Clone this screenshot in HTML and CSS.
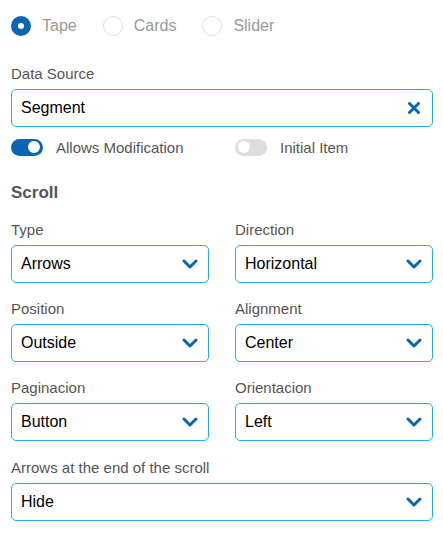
FILE: index.html
```html
<!DOCTYPE html>
<html lang="en">
<head>
  <meta charset="UTF-8">
  <title>Scroll settings</title>
  <link rel="stylesheet" href="styles.css">
</head>
<body>
  <div class="mode-row">
    <label class="radio checked"><span class="dot"></span>Tape</label>
    <label class="radio"><span class="dot"></span>Cards</label>
    <label class="radio"><span class="dot"></span>Slider</label>
  </div>

  <div class="field">
    <div class="field-label">Data Source</div>
    <div class="box">
      <span class="value">Segment</span>
      <svg class="clear" width="12" height="12" viewBox="0 0 12 12"><path d="M1.5 1.5L10.5 10.5M10.5 1.5L1.5 10.5" stroke="#0a66b2" stroke-width="3" stroke-linecap="round"/></svg>
    </div>
  </div>

  <div class="toggles">
    <label class="toggle on"><span class="track"><span class="knob"></span></span>Allows Modification</label>
    <label class="toggle"><span class="track"><span class="knob"></span></span>Initial Item</label>
  </div>

  <h2>Scroll</h2>

  <div class="grid">
    <div class="field">
      <div class="field-label">Type</div>
      <div class="box"><span class="value">Arrows</span><svg class="chev" width="16" height="10" viewBox="0 0 16 10"><path d="M2 2L8 8L14 2" fill="none" stroke="#0a66b2" stroke-width="3" stroke-linecap="round" stroke-linejoin="round"/></svg></div>
    </div>
    <div class="field">
      <div class="field-label">Direction</div>
      <div class="box"><span class="value">Horizontal</span><svg class="chev" width="16" height="10" viewBox="0 0 16 10"><path d="M2 2L8 8L14 2" fill="none" stroke="#0a66b2" stroke-width="3" stroke-linecap="round" stroke-linejoin="round"/></svg></div>
    </div>
    <div class="field">
      <div class="field-label">Position</div>
      <div class="box"><span class="value">Outside</span><svg class="chev" width="16" height="10" viewBox="0 0 16 10"><path d="M2 2L8 8L14 2" fill="none" stroke="#0a66b2" stroke-width="3" stroke-linecap="round" stroke-linejoin="round"/></svg></div>
    </div>
    <div class="field">
      <div class="field-label">Alignment</div>
      <div class="box"><span class="value">Center</span><svg class="chev" width="16" height="10" viewBox="0 0 16 10"><path d="M2 2L8 8L14 2" fill="none" stroke="#0a66b2" stroke-width="3" stroke-linecap="round" stroke-linejoin="round"/></svg></div>
    </div>
    <div class="field">
      <div class="field-label">Paginacion</div>
      <div class="box"><span class="value">Button</span><svg class="chev" width="16" height="10" viewBox="0 0 16 10"><path d="M2 2L8 8L14 2" fill="none" stroke="#0a66b2" stroke-width="3" stroke-linecap="round" stroke-linejoin="round"/></svg></div>
    </div>
    <div class="field">
      <div class="field-label">Orientacion</div>
      <div class="box"><span class="value">Left</span><svg class="chev" width="16" height="10" viewBox="0 0 16 10"><path d="M2 2L8 8L14 2" fill="none" stroke="#0a66b2" stroke-width="3" stroke-linecap="round" stroke-linejoin="round"/></svg></div>
    </div>
  </div>

  <div class="field">
    <div class="field-label">Arrows at the end of the scroll</div>
    <div class="box"><span class="value">Hide</span><svg class="chev" width="16" height="10" viewBox="0 0 16 10"><path d="M2 2L8 8L14 2" fill="none" stroke="#0a66b2" stroke-width="3" stroke-linecap="round" stroke-linejoin="round"/></svg></div>
  </div>
</body>
</html>
```

FILE: styles.css
```css
body {
  margin: 0;
  padding: 16px 10px 0 11px;
  font-family: "Liberation Sans", Arial, sans-serif;
  background-color: #ffffff;
  color: #555;
}
.mode-row {
  display: flex;
  align-items: center;
  gap: 26px;
  height: 20px;
  margin-bottom: 29px;
}
.radio {
  display: flex;
  align-items: center;
  gap: 11px;
  font-size: 16px;
  color: #999;
  cursor: pointer;
}
.radio .dot {
  width: 20px;
  height: 20px;
  box-sizing: border-box;
  border-radius: 50%;
  border: 1.5px solid #ddd;
  background-color: #fff;
}
.radio.checked .dot {
  border: 7px solid #0a66b2;
}
.field {
  margin-bottom: 16px;
}
.field-label {
  font-size: 15px;
  line-height: 18px;
  margin-bottom: 6px;
  color: #555;
}
.box {
  display: flex;
  align-items: center;
  justify-content: space-between;
  height: 38px;
  box-sizing: border-box;
  padding: 0 10px 0 9px;
  border: 1px solid #1fb0e8;
  border-radius: 5px;
  background-color: #fff;
}
.box .value {
  font-size: 16px;
  color: #000;
}
.clear {
  margin-right: 2px;
}
.toggles {
  display: grid;
  grid-template-columns: 1fr 1fr;
  gap: 26px;
  margin-top: -6px;
  margin-bottom: 25px;
}
.toggle {
  display: flex;
  align-items: center;
  gap: 13px;
  height: 20px;
  font-size: 15px;
  color: #555;
  cursor: pointer;
}
.track {
  display: flex;
  align-items: center;
  width: 32px;
  height: 17px;
  box-sizing: border-box;
  padding: 0 3px;
  border-radius: 9px;
  background-color: #ddd;
}
.knob {
  width: 12px;
  height: 12px;
  border-radius: 50%;
  background-color: #fff;
}
.toggle.on .track {
  background-color: #0a66b2;
  justify-content: flex-end;
}
h2 {
  margin: 0 0 17px;
  font-size: 17px;
  line-height: 22px;
  font-weight: bold;
  color: #555;
}
.grid {
  display: grid;
  grid-template-columns: 1fr 1fr;
  column-gap: 26px;
  margin-bottom: 1px;
}
.grid .field {
  margin-bottom: 17px;
}
```
